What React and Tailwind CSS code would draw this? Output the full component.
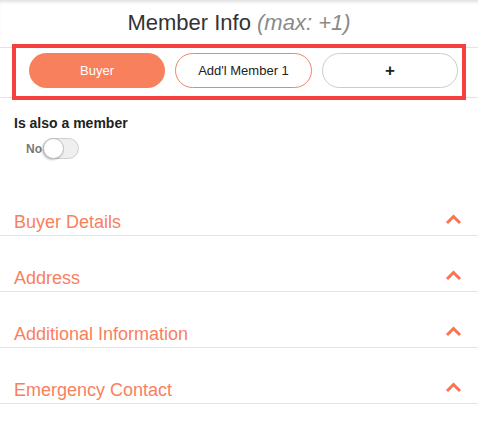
import React from 'react';

const sections = ['Buyer Details', 'Address', 'Additional Information', 'Emergency Contact'];

const Chevron = () => (
  <svg width="17" height="12" viewBox="0 0 17 12" className="mb-[8px] shrink-0">
    <path d="M2 10 L8.5 3.5 L15 10" fill="none" stroke="#f97550" strokeWidth="3" />
  </svg>
);

const Toggle = () => (
  <div className="relative w-[36px] h-[21px] rounded-full bg-[#efefef] border border-[#cfcfcf]">
    <div className="absolute left-[-1px] top-[-1px] w-[21px] h-[21px] rounded-full bg-white border border-[#bdbdbd] shadow-[-1px_1px_2px_rgba(0,0,0,0.25)]" />
  </div>
);

const App = () => {
  return (
    <div className="relative w-[478px] h-[446px] bg-white overflow-hidden font-['Liberation_Sans',Arial,sans-serif]">
      <div className="h-[48px] border-b border-[#e4e4e4] pt-[9px] text-center leading-[28px] shadow-[inset_0_4px_4px_-3px_rgba(0,0,0,0.18)]">
        <span className="text-[22px] text-[#333]">Member Info </span>
        <span className="text-[22px] italic text-[#8a8a8a]">(max: +1)</span>
      </div>

      <div className="flex gap-[10px] pl-[29px] pt-[5px] pb-[9px] border-b border-[#e4e4e4]">
        <button className="w-[136px] h-[35px] rounded-full bg-[#f9805c] text-white text-[13px]">
          Buyer
        </button>
        <button className="w-[137px] h-[35px] rounded-full border border-[#f2846a] bg-white text-[#222] text-[13px]">
          Add'l Member 1
        </button>
        <button className="w-[136px] h-[35px] rounded-full border border-[#cccccc] bg-white text-[#222] text-[17px] font-bold">
          +
        </button>
      </div>

      <div className="absolute left-[12px] top-[44px] w-[454px] h-[56px] border-4 border-[#f5403f] pointer-events-none" />

      <div className="pl-[14px] mt-[17px] text-[14px] font-bold leading-[17px] text-[#222]">
        Is also a member
      </div>
      <div className="flex items-center mt-[6px] pl-[26px] gap-[1px]">
        <span className="text-[12px] font-bold text-[#777]">No</span>
        <Toggle />
      </div>

      <div className="mt-[21px]">
        {sections.map((s) => (
          <div
            key={s}
            className="h-[56px] flex items-end justify-between border-b border-[#e4e4e4] pl-[14px] pr-[16px] pb-[2px]"
          >
            <span className="text-[18px] leading-[22px] text-[#f9805e]">{s}</span>
            <Chevron />
          </div>
        ))}
      </div>
    </div>
  );
};

export default App;
